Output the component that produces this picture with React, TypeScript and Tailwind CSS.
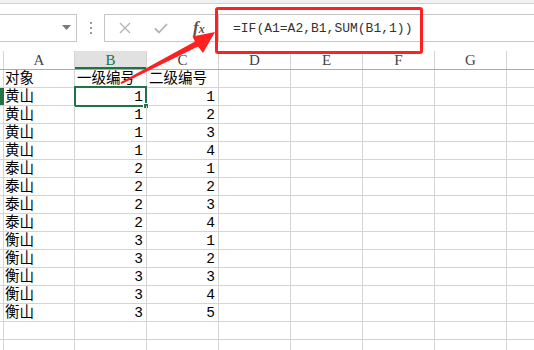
import React from "react";

type Row = [string, string, string];

const rows: Row[] = [
  ["对象", "一级编号", "二级编号"],
  ["黄山", "1", "1"],
  ["黄山", "1", "2"],
  ["黄山", "1", "3"],
  ["黄山", "1", "4"],
  ["泰山", "2", "1"],
  ["泰山", "2", "2"],
  ["泰山", "2", "3"],
  ["泰山", "2", "4"],
  ["衡山", "3", "1"],
  ["衡山", "3", "2"],
  ["衡山", "3", "3"],
  ["衡山", "3", "4"],
  ["衡山", "3", "5"],
  ["", "", ""],
  ["", "", ""],
  ["", "", ""],
];

const cols = ["A", "B", "C", "D", "E", "F", "G"];
const widths = ["w-[71px]", "w-[72px]", "w-[72px]", "w-[72px]", "w-[72px]", "w-[72px]", "w-[72px]"];

const isNum = (s: string) => /^\d+$/.test(s);

const FormulaBar: React.FC = () => (
  <div className="flex items-start h-[47px] pt-[10px]">
    {/* name box */}
    <div className="relative -ml-[1px] w-[78px] h-[28px] border border-[#c6c6c6] bg-white">
      <svg className="absolute left-[62px] top-[10px]" width="9" height="5" viewBox="0 0 9 5">
        <path d="M0 0 H9 L4.5 5 Z" fill="#7a7a7a" />
      </svg>
    </div>
    {/* grip dots */}
    <div className="w-[27px] h-[28px] flex flex-col items-center justify-center gap-[3px]">
      <span className="w-[2px] h-[2px] bg-[#9a9a9a]" />
      <span className="w-[2px] h-[2px] bg-[#9a9a9a]" />
      <span className="w-[2px] h-[2px] bg-[#9a9a9a]" />
    </div>
    {/* formula controls + input */}
    <div className="flex-1 flex h-[28px] border-y border-l border-[#c6c6c6] bg-white">
      <div className="w-[113px] flex items-center">
        <svg className="ml-[14px]" width="12" height="12" viewBox="0 0 12 12">
          <path d="M1 1 L11 11 M11 1 L1 11" stroke="#b4b4b4" strokeWidth="1.4" fill="none" />
        </svg>
        <svg className="ml-[23px]" width="14" height="11" viewBox="0 0 14 11">
          <path d="M1 5.5 L5 9.5 L13 1" stroke="#b4b4b4" strokeWidth="1.8" fill="none" />
        </svg>
        <span
          className="ml-[25px] -mt-[2px] text-[17px] italic font-bold text-[#555] leading-none"
          style={{ fontFamily: '"Liberation Serif", serif' }}
        >
          f<span className="text-[12px]">x</span>
        </span>
      </div>
      <div className="flex-1 flex items-center border-l border-[#c6c6c6] pl-[14px]">
        <span
          className="text-[13px] text-[#333] leading-none"
          style={{ fontFamily: '"Liberation Mono", monospace' }}
        >
          =IF(A1=A2,B1,SUM(B1,1))
        </span>
      </div>
    </div>
  </div>
);

const Grid: React.FC = () => (
  <div style={{ fontFamily: '"Liberation Mono", "Noto Sans CJK SC", monospace' }}>
    {/* column headers */}
    <div className="flex h-[19px] border-b border-[#ababab]" style={{ fontFamily: '"Liberation Serif", serif' }}>
      <div className="w-[4px] shrink-0 border-r border-[#d4d4d4]" />
      {cols.map((c, i) => (
        <div
          key={c}
          className={`${widths[i]} shrink-0 flex items-center justify-center border-r border-[#d4d4d4] text-[15px] ${
            c === "B" ? "bg-[#e1e1e1] text-[#217346] shadow-[inset_0_-2px_0_#217346]" : "text-[#444]"
          }`}
        >
          {c}
        </div>
      ))}
      <div className="flex-1" />
    </div>
    {/* data rows */}
    {rows.map((r, ri) => (
      <div key={ri} className="flex h-[18px] border-b border-[#d4d4d4]">
        <div
          className={`w-[4px] shrink-0 border-r ${ri === 1 ? "bg-[#217346] border-[#217346]" : "border-[#d4d4d4]"}`}
        />
        {cols.map((c, ci) => {
          const v = ci < 3 ? r[ci] : "";
          return (
            <div
              key={c}
              className={`${widths[ci]} shrink-0 relative flex items-center pt-[2px] border-r border-[#d4d4d4] text-[14.5px] text-black leading-none ${
                isNum(v) ? "justify-end pr-[3px]" : ci === 0 ? "pl-[1px]" : "pl-[2px]"
              }`}
            >
              <span className="whitespace-nowrap">{v}</span>
              {ri === 1 && ci === 1 && (
                <div className="absolute -left-[1px] -top-[2px] w-[73px] h-[21px] border-2 border-[#217346]">
                  <div className="absolute -right-[4px] -bottom-[4px] w-[6px] h-[6px] bg-[#217346] border border-white" />
                </div>
              )}
            </div>
          );
        })}
        <div className="flex-1" />
      </div>
    ))}
  </div>
);

export default function App() {
  return (
    <div className="relative w-[534px] h-[350px] overflow-hidden bg-white">
      <div className="h-[4px] bg-[#f1f1f1] border-b border-[#d2d2d2]" />
      <FormulaBar />
      <Grid />
      {/* red annotation box around the formula */}
      <div className="absolute left-[215px] top-[7px] w-[208px] h-[47px] border-[3px] border-[#ff2121] rounded-[3px]" />
      {/* red annotation arrow */}
      <svg className="absolute left-0 top-0 pointer-events-none" width="534" height="350">
        <polygon
          points="120.5,82.2 195,41.5 192.5,36.5 215,32 203,53 198,46.5 121.5,84"
          fill="#ff2121"
        />
      </svg>
    </div>
  );
}
